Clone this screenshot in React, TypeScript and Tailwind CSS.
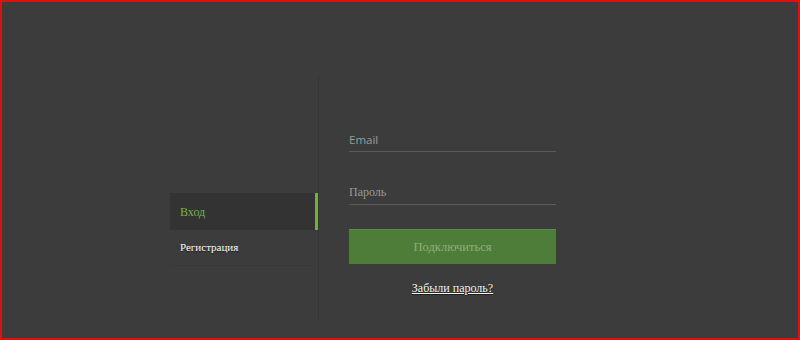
import React from "react";

export default function App() {
  return (
    <div className="w-[800px] h-[340px] border-2 border-[#e01010] bg-[#3c3c3c] overflow-hidden">
      <div className="flex pl-[168px] pt-[73px]">
        <div className="w-[149px] h-[247px] border-r border-[#363636] flex flex-col pt-[118px]">
          <div className="h-[37px] flex items-center pl-[10px] bg-[#333333] border-r-[3px] border-[#6cb33e] text-[12px] text-[#74b544] font-['Liberation_Serif','Times_New_Roman',serif]">
            Вход
          </div>
          <div
            className="h-[36px] flex items-center pl-[10px] border-b border-[#383838] mr-[3px] text-[11px] text-[#f2f2f2] font-['Liberation_Serif','Times_New_Roman',serif]"
            style={{ textShadow: "0 1px 1px rgba(0,0,0,0.6), 0 0 1px rgba(255,255,255,0.3)" }}
          >
            Регистрация
          </div>
        </div>
        <div className="pl-[30px] pt-[53px] w-[238px]">
          <div className="w-[207px]">
            <div className="h-[24px] border-b border-[#5a5a5a] text-[11.5px] text-[#9a9a9a] flex items-center font-['Open_Sans','DejaVu_Sans',sans-serif]">
              Email
            </div>
            <div className="mt-[28px] h-[25px] border-b border-[#5a5a5a] text-[12px] text-[#9a9a9a] flex items-center font-['Liberation_Serif','Times_New_Roman',serif]">
              Пароль
            </div>
            <div className="mt-[24px] h-[35px] bg-[#4e7d39] border-t border-[#5a8a43] flex items-center justify-center text-[12.5px] text-[#8fae7e] font-['Liberation_Serif','Times_New_Roman',serif]">
              Подключиться
            </div>
            <div
              className="mt-[15px] text-center text-[12px] text-[#f4f4f4] underline font-['Liberation_Serif','Times_New_Roman',serif]"
              style={{ textShadow: "0 1px 1px rgba(0,0,0,0.5)" }}
            >
              Забыли пароль?
            </div>
          </div>
        </div>
      </div>
    </div>
  );
}
